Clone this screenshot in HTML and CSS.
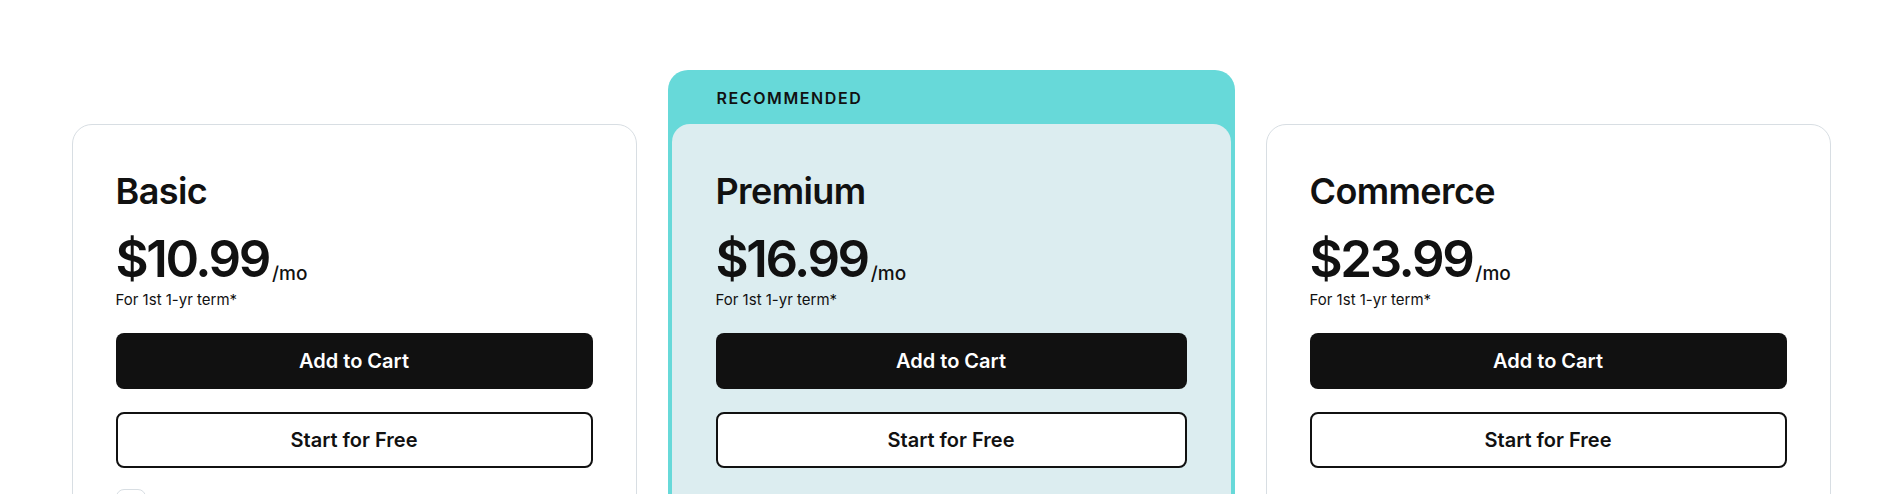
FILE: index.html
```html
<!DOCTYPE html>
<html lang="en">
<head>
<meta charset="utf-8">
<title>Plans</title>
<link rel="stylesheet" href="styles.css">
</head>
<body>
<main class="plans">
  <section class="plan">
    <div class="card">
      <h2 class="plan-name">Basic</h2>
      <div class="price-row"><span class="price">$10.99</span><span class="per">/mo</span></div>
      <p class="term">For 1st 1-yr term*</p>
      <button class="btn btn-primary">Add to Cart</button>
      <button class="btn btn-outline">Start for Free</button>
      <ul class="features">
        <li><span class="feat-icon"></span></li>
      </ul>
    </div>
  </section>
  <section class="plan plan-featured">
    <div class="badge">RECOMMENDED</div>
    <div class="card card-featured">
      <h2 class="plan-name">Premium</h2>
      <div class="price-row"><span class="price">$16.99</span><span class="per">/mo</span></div>
      <p class="term">For 1st 1-yr term*</p>
      <button class="btn btn-primary">Add to Cart</button>
      <button class="btn btn-outline">Start for Free</button>
    </div>
  </section>
  <section class="plan">
    <div class="card">
      <h2 class="plan-name">Commerce</h2>
      <div class="price-row"><span class="price">$23.99</span><span class="per">/mo</span></div>
      <p class="term">For 1st 1-yr term*</p>
      <button class="btn btn-primary">Add to Cart</button>
      <button class="btn btn-outline">Start for Free</button>
    </div>
  </section>
</main>
</body>
</html>
```
FILE: styles.css
```css
html, body {
  margin: 0;
  padding: 0;
  background: #fff;
  overflow: hidden;
}
body {
  font-family: Inter, "Noto Sans", sans-serif;
  color: #111;
}
.plans {
  width: 1759px;
  margin: 0 auto;
  padding-top: 70px;
  display: grid;
  grid-template-columns: 565px 567px 565px;
  column-gap: 31px;
  align-items: end;
}
.plan {
  display: flex;
  flex-direction: column;
  height: 480px;
}
.card {
  flex: 1;
  box-sizing: border-box;
  border: 1px solid #d8dee3;
  border-radius: 20px;
  padding: 45px 43px 0;
  margin-top: 54px;
  display: flex;
  flex-direction: column;
  background: #fff;
}
.plan-featured {
  background: #67d9d9;
  border-radius: 20px 20px 0 0;
}
.badge {
  height: 54px;
  display: flex;
  align-items: center;
  padding-left: 49px;
  padding-top: 2px;
  box-sizing: border-box;
  font-size: 16px;
  line-height: 20px;
  font-weight: 600;
  letter-spacing: 1.6px;
}
.card-featured {
  margin: 0 4px;
  border: none;
  padding: 46px 44px 0;
  background: #dcedf0;
  border-radius: 18px 18px 0 0;
}
.plan-name {
  margin: 0;
  font-size: 36px;
  line-height: 43px;
  font-weight: 600;
  letter-spacing: -0.6px;
}
.price-row {
  margin-top: 20px;
  display: flex;
  align-items: baseline;
  gap: 3px;
}
.price {
  font-size: 51px;
  line-height: 52px;
  font-weight: 600;
  letter-spacing: -2.4px;
}
.per {
  font-size: 19px;
  line-height: 20px;
  font-weight: 500;
  transform: translateY(3px);
}
.term {
  margin: 5px 0 0;
  font-size: 15px;
  line-height: 20px;
}
.btn {
  display: block;
  width: 100%;
  height: 56px;
  border-radius: 8px;
  font-family: inherit;
  font-size: 20px;
  font-weight: 600;
  cursor: pointer;
}
.btn-primary {
  margin-top: 23px;
  background: #111;
  color: #fff;
  border: none;
}
.btn-outline {
  margin-top: 23px;
  background: #fff;
  color: #111;
  border: 2px solid #111;
}
.features {
  list-style: none;
  margin: 21px 0 0;
  padding: 0;
}
.feat-icon {
  display: block;
  width: 30px;
  height: 30px;
  border: 1px solid #d8dee3;
  border-radius: 8px;
  box-sizing: border-box;
}
```
